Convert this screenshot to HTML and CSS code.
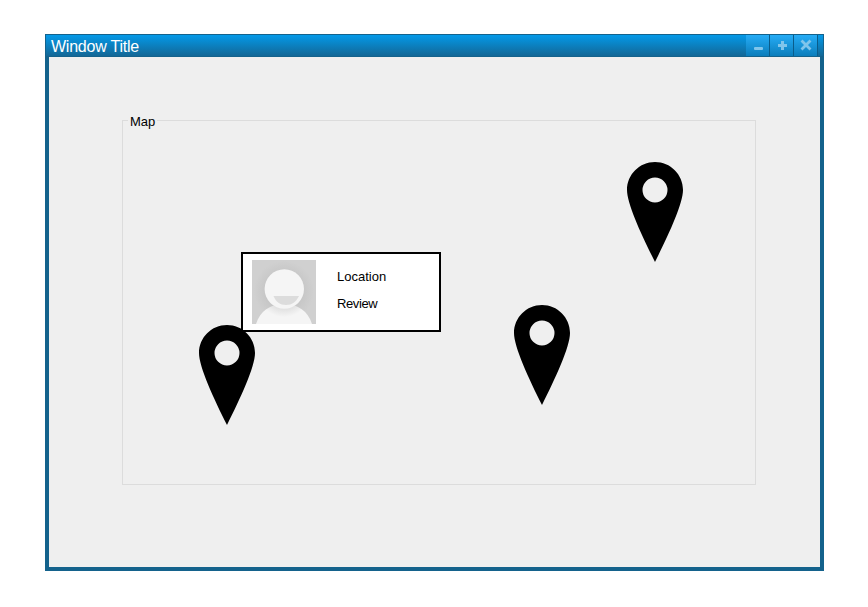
FILE: index.html
```html
<!DOCTYPE html>
<html lang="en">
<head>
<meta charset="utf-8">
<title>Window Title</title>
<link rel="stylesheet" href="styles.css">
</head>
<body>
<svg class="defs" width="0" height="0" aria-hidden="true">
  <symbol id="pin" viewBox="0 0 56 100">
    <path fill-rule="evenodd" d="M28 0C12.5 0 0 12.500 0 28C0 42 15 74 28 100C41 74 56 42 56 28C56 12.500 43.500 0 28 0ZM28 15.500A12.500 12.500 0 1 1 28 40.500A12.500 12.500 0 1 1 28 15.500Z"/>
  </symbol>
</svg>
<main class="window">
  <header class="titlebar">
    <h1 class="title">Window Title</h1>
    <div class="controls">
      <button class="control" aria-label="Minimize"><svg width="23" height="21" viewBox="0 0 23 21"><rect x="8" y="12" width="9" height="3" rx="1"/></svg></button>
      <button class="control" aria-label="Maximize"><svg width="23" height="21" viewBox="0 0 23 21"><path d="M11 6h3v3h3v3h-3v3h-3v-3h-3v-3h3z"/></svg></button>
      <button class="control" aria-label="Close"><svg width="23" height="21" viewBox="0 0 23 21"><path d="M8.500 6.500l7 7M15.500 6.500l-7 7" stroke="#80c5eb" stroke-width="2.800" stroke-linecap="square" fill="none"/></svg></button>
    </div>
  </header>
  <section class="content">
    <fieldset class="map">
      <legend>Map</legend>
      <svg class="pin pin-west"><use href="#pin"/></svg>
      <svg class="pin pin-center"><use href="#pin"/></svg>
      <svg class="pin pin-north"><use href="#pin"/></svg>
      <article class="card">
        <svg class="avatar" viewBox="0 0 64 64">
          <defs>
            <radialGradient id="backdrop" gradientUnits="userSpaceOnUse" cx="32" cy="31" r="30">
              <stop offset=".6" stop-color="#c6c6c6"/><stop offset="1" stop-color="#d0d0d0"/>
            </radialGradient>
            <radialGradient id="shade" gradientUnits="userSpaceOnUse" cx="32" cy="30" r="27">
              <stop offset=".68" stop-color="#e0e0e0"/><stop offset="1" stop-color="#f5f5f5"/>
            </radialGradient>
          </defs>
          <rect width="64" height="64" fill="url(#backdrop)"/>
          <path d="M4 64C8 51 18 44 32 44S56 51 60 64Z" fill="url(#shade)"/>
          <circle cx="32.300" cy="29" r="19.700" fill="#f5f5f5"/>
          <path d="M21.500 36H47C44 42 40 45 34 45S24 42 21.500 36Z" fill="#dcdcdc"/>
        </svg>
        <div class="details"><span>Location</span><span class="review">Review</span></div>
      </article>
    </fieldset>
  </section>
</main>
</body>
</html>
```
FILE: styles.css
```css
* { box-sizing: border-box; }
body { margin: 0; padding: 34px 44px 36px 45px; background: #fff; font-family: "Liberation Sans", Arial, sans-serif; color: #000; }
.defs { display: block; height: 0; }
.window { width: 779px; height: 537px; display: flex; flex-direction: column; border: 1px solid #14628c; }
.titlebar { height: 22px; flex: none; display: flex; justify-content: space-between; padding: 0 5px; background: linear-gradient(#0499e8, #136796); border-bottom: 1px solid #14628c; }
.title { margin: 0; font-size: 16px; line-height: 24px; font-weight: 400; letter-spacing: -.23px; color: #fff; }
.controls { display: flex; }
.control { width: 24px; height: 21px; padding: 0; border: 0; border-right: 1px solid #0a5c8a; background: linear-gradient(#26acf6, #0b7dbb); }
.control svg { display: block; fill: #80c5eb; }
.content { flex: 1; padding: 54px 64px 82px 73px; background: #efefef; border: solid #14628c; border-width: 0 3px 3px; }
.map { position: relative; width: 634px; height: 374px; margin: 0; padding: 0; border: 1px solid #dcdcdc; font-size: 13px; }
.map legend { margin-left: 5px; padding: 2px 2px 0; line-height: 17px; }
.pin { position: absolute; width: 56px; height: 100px; }
.pin-west { left: 76px; top: 195px; }
.pin-center { left: 391px; top: 175px; }
.pin-north { left: 504px; top: 32px; }
.card { position: absolute; left: 118px; top: 122px; width: 200px; height: 80px; display: flex; gap: 21px; padding: 6px 9px; background: #fff; border: 2px solid #000; }
.avatar { width: 64px; height: 64px; flex: none; }
.details { display: flex; flex-direction: column; gap: 12px; padding-top: 9px; line-height: 15px; }
.review { letter-spacing: -.4px; }
```
